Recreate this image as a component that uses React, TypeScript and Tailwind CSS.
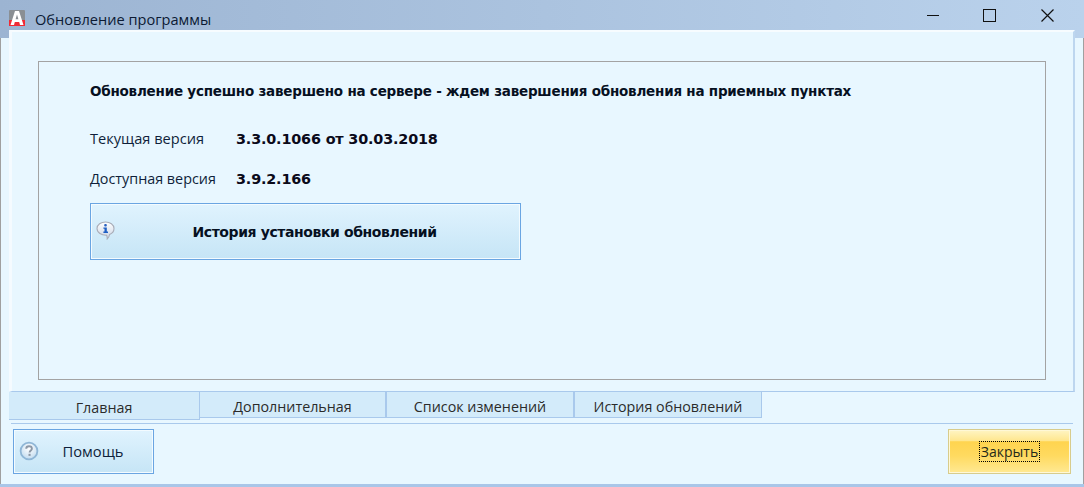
import React from "react";

const seg = "font-['Open_Sans','Noto_Sans',sans-serif]";

function Logo() {
  return (
    <svg width="16" height="16" viewBox="0 0 16 16" className="shrink-0 mt-[6px]">
      <rect width="16" height="16" rx="1" fill="#8a8f94" />
      <rect y="10" width="16" height="6" fill="#f02a35" />
      <path d="M1.5 15 L6 1 H10 L14.5 15 H11 L10.2 12 H5.8 L5 15 Z M6.6 9.3 H9.4 L8 4.5 Z" fill="#fff" fillRule="evenodd" />
    </svg>
  );
}

function InfoIcon() {
  return (
    <svg width="19" height="19" viewBox="0 0 19 19" className="shrink-0">
      <defs>
        <linearGradient id="bub" x1="0" y1="0" x2="0" y2="1">
          <stop offset="0" stopColor="#ffffff" />
          <stop offset="1" stopColor="#c9d3e4" />
        </linearGradient>
      </defs>
      <path d="M9.5 1 C14 1 18 3.6 18 7.6 C18 10.6 16 12.6 13.6 13.5 C13.3 15 12.6 17 11.2 18 C11.3 16.6 11 15 10.6 14.2 C5.5 14.4 1 11.8 1 7.6 C1 3.6 5 1 9.5 1 Z" fill="url(#bub)" stroke="#a9adb8" strokeWidth="1.1" />
      <rect x="8.2" y="3" width="2.6" height="2.4" rx="1" fill="#2a62c0" />
      <path d="M7.4 6.4 H10.8 V10.6 H12 V12 H7.4 V10.6 H8.5 V7.8 H7.4 Z" fill="#1f5fc4" />
    </svg>
  );
}

function HelpIcon() {
  return (
    <svg width="20" height="20" viewBox="0 0 20 20" className="shrink-0">
      <defs>
        <radialGradient id="hlp" cx="0.5" cy="0.35" r="0.7">
          <stop offset="0" stopColor="#ffffff" />
          <stop offset="1" stopColor="#bcd8ee" />
        </radialGradient>
      </defs>
      <circle cx="10" cy="10" r="8.4" fill="url(#hlp)" stroke="#8fb6d6" strokeWidth="1.8" />
      <path d="M7.2 7.8 C7.2 6.2 8.5 5.3 10 5.3 C11.7 5.3 12.9 6.2 12.9 7.7 C12.9 9.5 10.6 9.6 10.6 11.6" fill="none" stroke="#8d98a6" strokeWidth="1.9" />
      <rect x="9.5" y="12.8" width="2.1" height="2.1" fill="#8d98a6" />
    </svg>
  );
}

function Tab({ label, w, active, thin }: { label: string; w: string; active?: boolean; thin?: boolean }) {
  return (
    <div
      className={`${w} ${active ? "h-[28px] pt-[6px]" : "h-[26px] pt-[5px]"} ${thin ? "border-r" : "border-r-2"} border-b border-[#a9c9ec] bg-[#d3ebfa] text-center text-[14.3px] leading-[20px] text-[#2b2b2b] ${seg}`}
    >
      {label}
    </div>
  );
}

export default function App() {
  return (
    <div className="w-[1084px] h-[487px] overflow-hidden flex flex-col bg-gradient-to-r from-[#9cb4d2] to-[#bad2ec]">
      <div className="h-[30px] shrink-0 flex items-center pl-[9px]">
        <Logo />
        <span className={`ml-[10px] mt-[8px] text-[14.6px] leading-[20px] text-[#0c1a33] ${seg}`}>Обновление программы</span>
        <div className="ml-auto flex items-center h-full">
          <svg width="12" height="12" viewBox="0 0 12 12" className="mr-[44px]"><path d="M0 6.5 H12" stroke="#111" strokeWidth="1" /></svg>
          <svg width="13" height="13" viewBox="0 0 13 13" className="mr-[45px]"><rect x="0.5" y="0.5" width="12" height="12" fill="none" stroke="#111" strokeWidth="1" /></svg>
          <svg width="13" height="13" viewBox="0 0 13 13" className="mr-[30px]"><path d="M0.5 0.5 L12.5 12.5 M12.5 0.5 L0.5 12.5" stroke="#111" strokeWidth="1.2" /></svg>
        </div>
      </div>

      <div className="flex-1 flex min-h-0 relative">
        <div className="w-[9px] shrink-0 flex flex-col">
          <div className="h-[8px] shrink-0" />
          <div className="flex-1 bg-[#e8f7ff] border-l border-[#a0a0a0]" />
        </div>

        <div className="flex-1 flex flex-col min-w-0 bg-[#e8f7ff]">
          <div className="h-[362px] shrink-0 border-t-2 border-t-[#f7fcff] border-b border-b-[#a9c9ec] border-r-2 border-r-[#bdd6ef] border-l-[3px] border-l-[#f5fbff] pt-[29px] pl-[26px] pr-[27px]">
            <div className="h-[319px] border border-[#a3a3a3] pl-[51px] pt-[20px]">
              <div className="text-[13.5px] leading-[18px] font-bold text-[#06101f] font-['DejaVu_Sans',sans-serif] tracking-[-0.22px] whitespace-nowrap">
                Обновление успешно завершено на сервере - ждем завершения обновления на приемных пунктах
              </div>
              <div className="mt-[30px] flex items-center h-[18px] whitespace-nowrap">
                <span className={`w-[146px] text-[14.6px] text-[#0f1f3a] ${seg}`}>Текущая версия</span>
                <span className="mt-px text-[14.4px] font-bold text-[#0a0a1a] font-['DejaVu_Sans',sans-serif] tracking-[-0.17px]">3.3.0.1066 от 30.03.2018</span>
              </div>
              <div className="mt-[22px] flex items-center h-[18px] whitespace-nowrap">
                <span className={`w-[146px] text-[14.35px] text-[#0f1f3a] ${seg}`}>Доступная версия</span>
                <span className="mt-px text-[14.4px] font-bold text-[#0a0a1a] font-['DejaVu_Sans',sans-serif] tracking-[-0.17px]">3.9.2.166</span>
              </div>
              <button className="mt-[15px] relative w-[431px] h-[57px] flex items-center justify-center border border-[#6aa5e2] bg-gradient-to-b from-[#e0f3fe] to-[#c6e5f6] shadow-[inset_0_0_0_1px_#f3fbff]">
                <span className="absolute left-[5px] top-[17px]"><InfoIcon /></span>
                <span className="ml-[18px] mt-px text-[14px] font-bold text-[#06101f] font-['DejaVu_Sans',sans-serif] tracking-[-0.4px]">История установки обновлений</span>
              </button>
            </div>
          </div>

          <div className="flex shrink-0 items-start">
            <Tab label="Главная" w="w-[191px]" active thin />
            <Tab label="Дополнительная" w="w-[187px]" />
            <Tab label="Список изменений" w="w-[188px]" />
            <Tab label="История обновлений" w="w-[187px]" thin />
          </div>

          <div className="mt-[3px] ml-[2px] mr-[2px] border-t border-[#a9c9ec]" />

          <div className="mt-[5px] flex justify-between pl-[4px] pr-[4px]">
            <button className="relative w-[141px] h-[45px] flex items-center justify-center border border-[#6aa5e2] bg-gradient-to-b from-[#e0f3fe] to-[#c6e5f6] shadow-[inset_0_0_0_1px_#f3fbff]">
              <span className="absolute left-[5px] top-[11px]"><HelpIcon /></span>
              <span className={`ml-[19px] text-[14.7px] text-[#0f1f3a] ${seg}`}>Помощь</span>
            </button>
            <button className="relative w-[123px] h-[45px] flex items-center justify-center border border-[#d8cc8c] bg-[linear-gradient(to_bottom,#fff5c4_0%,#ffe68c_26%,#ffd44f_27%,#ffda60_60%,#ffe993_100%)] shadow-[inset_0_0_0_1px_#fff8d6]">
              <span className={`px-px border border-dotted border-black text-[14px] leading-[19px] text-[#1f2a1a] ${seg}`}>Закрыть</span>
            </button>
          </div>
        </div>

        <div className="w-[9px] shrink-0 flex flex-col">
          <div className="h-[8px] shrink-0" />
          <div className="flex-1 bg-[#e8f7ff] border-r border-[#a0a0a0]" />
        </div>

        <div className="absolute left-0 right-0 bottom-0 h-[3px] bg-[#a9c6e8]" />
      </div>
    </div>
  );
}
